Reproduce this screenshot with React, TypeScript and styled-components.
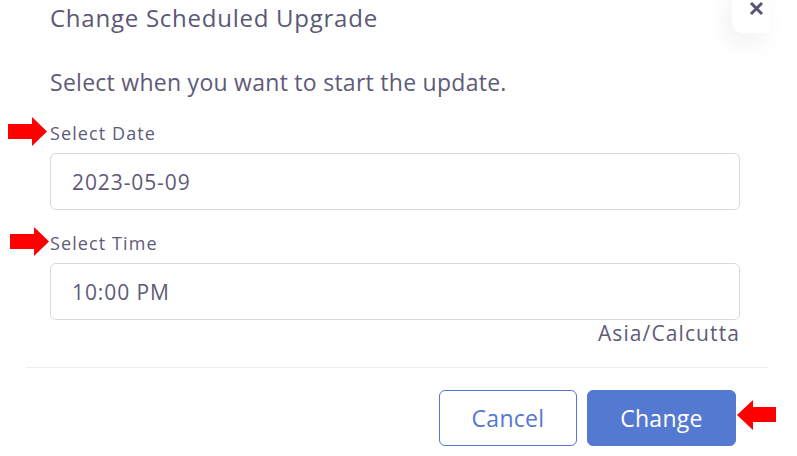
import React from "react";
import styled, { createGlobalStyle } from "styled-components";

const Global = createGlobalStyle`
  html, body { margin: 0; padding: 0; background: #ffffff; }
  body { font-family: "Open Sans", "DejaVu Sans", sans-serif; overflow: hidden; }
  * { box-sizing: border-box; }
`;

const Dialog = styled.div`
  position: relative;
  width: 769px;
  height: 456px;
  background: #fff;
  display: flex;
  flex-direction: column;
`;

const Header = styled.div`
  padding: 2px 50px 0 50px;
`;

const Title = styled.h2`
  margin: 0;
  font-size: 24px;
  line-height: 32px;
  font-weight: 400;
  color: #5b5876;
  letter-spacing: 0.75px;
`;

const Body = styled.div`
  padding: 33px 29px 0 50px;
  display: flex;
  flex-direction: column;
`;

const Intro = styled.p`
  margin: 0 0 24px 0;
  font-size: 23px;
  line-height: 30px;
  color: #5e5b78;
  letter-spacing: 0.27px;
`;

const Field = styled.div<{ $gap: number }>`
  display: flex;
  flex-direction: column;
  margin-bottom: ${(p) => p.$gap}px;
`;

const Label = styled.label`
  font-size: 18px;
  line-height: 24px;
  color: #5e5b78;
  letter-spacing: 1.1px;
  margin-bottom: 8px;
`;

const Input = styled.div`
  height: 57px;
  border: 1px solid #d9d8df;
  border-radius: 6px;
  display: flex;
  align-items: center;
  padding-left: 21px;
  font-size: 21px;
  color: #5e5b78;
  letter-spacing: 0.9px;
`;

const Zone = styled.div`
  text-align: right;
  font-size: 21px;
  line-height: 26px;
  color: #5e5b78;
  letter-spacing: 1.1px;
`;

const Footer = styled.div`
  margin: 21px 0 0 26px;
  border-top: 1px solid #efeff2;
  padding: 22px 33px 0 0;
  display: flex;
  justify-content: flex-end;
  gap: 10px;
`;

const Button = styled.button<{ $primary?: boolean }>`
  height: 56px;
  width: ${(p) => (p.$primary ? 149 : 138)}px;
  border-radius: 6px;
  font-family: inherit;
  font-size: 23px;
  letter-spacing: 0.3px;
  cursor: pointer;
  border: 1px solid #5479d0;
  background: ${(p) => (p.$primary ? "#5479d0" : "#ffffff")};
  color: ${(p) => (p.$primary ? "#ffffff" : "#5479d0")};
`;

const CloseBox = styled.div`
  position: absolute;
  top: -10px;
  right: 0;
  width: 37px;
  height: 43px;
  background: #fff;
  border-bottom-left-radius: 10px;
  box-shadow: -6px 10px 24px rgba(0, 0, 0, 0.06);
  padding: 11px 0 0 17px;
`;

const Arrow = styled.svg<{ $x: number; $y: number }>`
  position: absolute;
  left: ${(p) => p.$x}px;
  top: ${(p) => p.$y}px;
`;

const RightArrow = ({ x, y }: { x: number; y: number }) => (
  <Arrow $x={x} $y={y} width="40" height="30" viewBox="0 0 40 30">
    <polygon points="0,7 24,7 24,0 39,14.5 24,29 24,22 0,22" fill="#ff0000" />
  </Arrow>
);

const LeftArrow = ({ x, y }: { x: number; y: number }) => (
  <Arrow $x={x} $y={y} width="40" height="32" viewBox="0 0 40 32">
    <polygon points="39,7 16,7 16,0 0,15 16,30 16,22 39,22" fill="#ff0000" />
  </Arrow>
);

export default function App() {
  return (
    <>
      <Global />
      <Dialog>
        <CloseBox>
          <svg width="15" height="15" viewBox="0 0 15 15" style={{ display: "block" }}>
            <path d="M2 2 L13 13 M13 2 L2 13" stroke="#595475" strokeWidth="3" />
          </svg>
        </CloseBox>
        <Header>
          <Title>Change Scheduled Upgrade</Title>
        </Header>
        <Body>
          <Intro>Select when you want to start the update.</Intro>
          <Field $gap={21}>
            <Label>Select Date</Label>
            <Input>2023-05-09</Input>
          </Field>
          <Field $gap={0}>
            <Label>Select Time</Label>
            <Input>10:00 PM</Input>
          </Field>
          <Zone>Asia/Calcutta</Zone>
        </Body>
        <Footer>
          <Button>Cancel</Button>
          <Button $primary>Change</Button>
        </Footer>
        <RightArrow x={8} y={117} />
        <RightArrow x={10} y={227} />
        <LeftArrow x={737} y={400} />
      </Dialog>
    </>
  );
}
